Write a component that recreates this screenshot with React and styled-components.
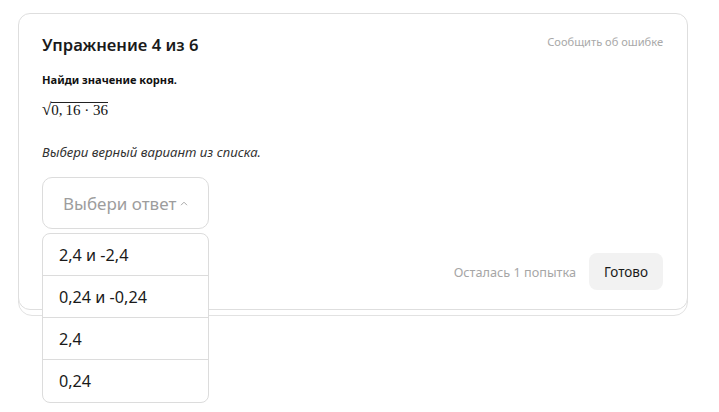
import styled, { createGlobalStyle } from "styled-components";

const GlobalStyle = createGlobalStyle`
  body {
    margin: 0;
    background: #fff;
    font-family: "Noto Sans", "Open Sans", sans-serif;
    color: #1f1f1f;
  }
`;

const Page = styled.div`
  min-height: 412px;
  box-sizing: border-box;
  padding: 13px 0 0 18px;
`;

const Card = styled.section`
  position: relative;
  width: 670px;
  box-sizing: border-box;
  padding: 19px 24px 19px 23px;
  border: 1px solid #dedede;
  border-radius: 12px;
  background: #fff;
  display: flex;
  flex-direction: column;

  &::before {
    content: "";
    position: absolute;
    left: -1px;
    right: -1px;
    bottom: -7px;
    height: 40px;
    border: 1px solid #e2e2e2;
    border-radius: 14px;
    background: #fff;
    z-index: -1;
  }
`;

const Header = styled.div`
  display: flex;
  justify-content: space-between;
  align-items: flex-start;
`;

const Title = styled.h2`
  margin: 0;
  font-size: 16.6px;
  line-height: 24px;
  font-weight: 600;
  color: #1a1a1a;
`;

const ReportLink = styled.a`
  margin-top: 1px;
  font-size: 11.1px;
  line-height: 16px;
  color: #a9a9a9;
  cursor: pointer;
`;

const Question = styled.p`
  margin: 15px 0 0;
  font-size: 11.1px;
  line-height: 16px;
  font-weight: 700;
  color: #111;
`;

const Formula = styled.div`
  margin-top: 12px;
  font-family: "Liberation Serif", "DejaVu Serif", serif;
  font-size: 15px;
  line-height: 20px;
  color: #111;
`;

const RadicalSign = styled.span`
  font-size: 17px;
`;

const Radicand = styled.span`
  display: inline-block;
  line-height: 13px;
  border-top: 1px solid #222;
  padding-top: 1px;
`;

const Hint = styled.p`
  margin: 22px 0 0;
  font-size: 13.2px;
  line-height: 20px;
  font-style: italic;
  color: #333;
`;

const SelectWrap = styled.div`
  position: relative;
  margin-top: 15px;
  width: 167px;
`;

const SelectBox = styled.button`
  width: 167px;
  height: 52px;
  box-sizing: border-box;
  padding: 0 0 0 20px;
  display: flex;
  align-items: center;
  gap: 4px;
  border: 1px solid #dcdcdc;
  border-radius: 10px;
  background: #fff;
  font-family: inherit;
  font-size: 17px;
  color: #9d9d9d;
`;

const Menu = styled.ul`
  position: absolute;
  top: 56px;
  left: 0;
  width: 167px;
  box-sizing: border-box;
  margin: 0;
  padding: 0;
  list-style: none;
  border: 1px solid #dcdcdc;
  border-radius: 8px;
  background: #fff;
  z-index: 2;
`;

const MenuItem = styled.li`
  height: 42px;
  box-sizing: border-box;
  padding: 0 16px;
  display: flex;
  align-items: center;
  font-size: 16.2px;
  color: #1a1a1a;
  border-bottom: ${(p) => (p.$last ? "none" : "1px solid #dcdcdc")};
`;

const Footer = styled.div`
  margin-top: 24px;
  display: flex;
  justify-content: flex-end;
  align-items: center;
  gap: 13px;
`;

const Attempts = styled.span`
  font-size: 12.7px;
  color: #a6a6a6;
`;

const DoneButton = styled.button`
  width: 74px;
  height: 37px;
  border: none;
  border-radius: 8px;
  background: #f2f2f2;
  font-family: inherit;
  font-size: 13.5px;
  color: #1a1a1a;
`;

const options = ["2,4 и -2,4", "0,24 и -0,24", "2,4", "0,24"];

export default function App() {
  return (
    <Page>
      <GlobalStyle />
      <Card>
        <Header>
          <Title>Упражнение 4 из 6</Title>
          <ReportLink>Сообщить об ошибке</ReportLink>
        </Header>
        <Question>Найди значение корня.</Question>
        <Formula>
          <RadicalSign>√</RadicalSign>
          <Radicand>0,&thinsp;16 · 36</Radicand>
        </Formula>
        <Hint>Выбери верный вариант из списка.</Hint>
        <SelectWrap>
          <SelectBox>
            Выбери ответ
            <svg width="8" height="5" viewBox="0 0 8 5" fill="none">
              <path d="M1 4.2 4 1.2l3 3" stroke="#a8a8a8" strokeWidth="1" />
            </svg>
          </SelectBox>
          <Menu>
            {options.map((o, i) => (
              <MenuItem key={o} $last={i === options.length - 1}>
                {o}
              </MenuItem>
            ))}
          </Menu>
        </SelectWrap>
        <Footer>
          <Attempts>Осталась 1 попытка</Attempts>
          <DoneButton>Готово</DoneButton>
        </Footer>
      </Card>
    </Page>
  );
}
